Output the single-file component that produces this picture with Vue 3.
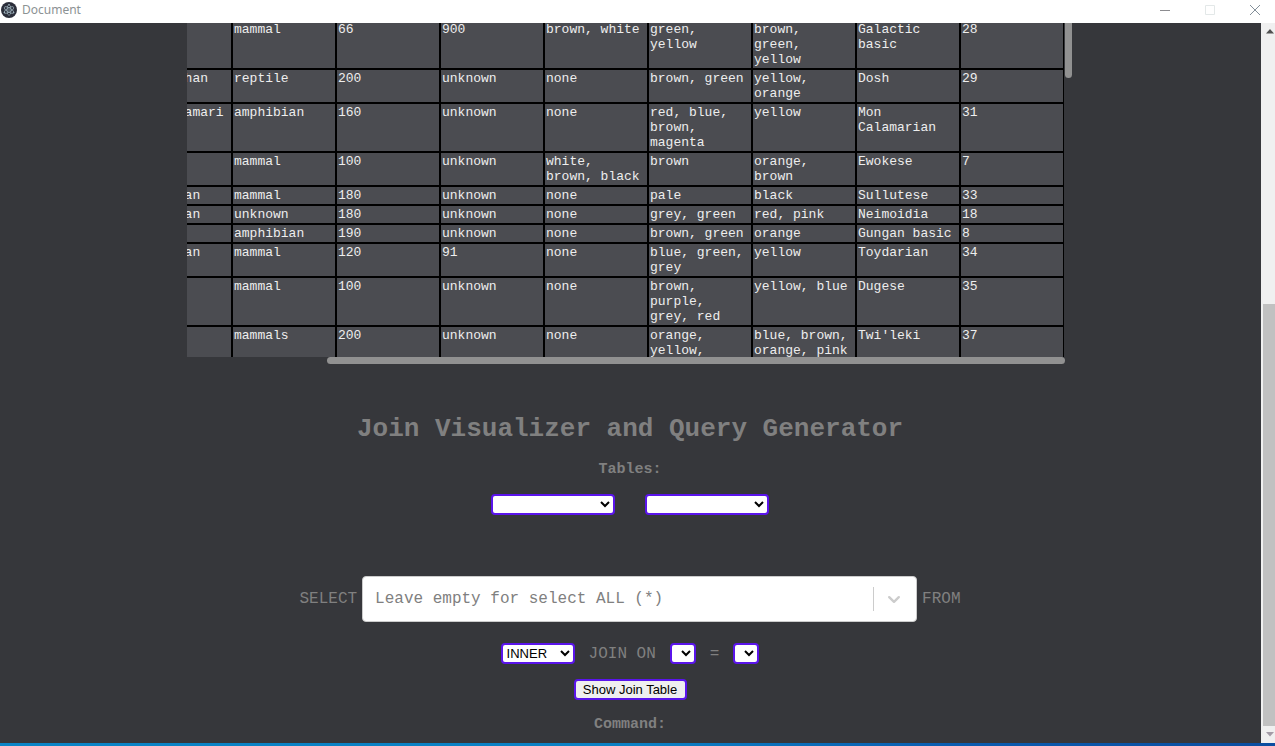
<script setup>
import { ref } from 'vue'

const rows = [
  ['', 'mammal', '66', '900', 'brown, white', 'green, yellow', 'brown, green, yellow', 'Galactic basic', '28'],
  ['Trandoshan', 'reptile', '200', 'unknown', 'none', 'brown, green', 'yellow, orange', 'Dosh', '29'],
  ['Mon Calamari', 'amphibian', '160', 'unknown', 'none', 'red, blue, brown, magenta', 'yellow', 'Mon Calamarian', '31'],
  ['', 'mammal', '100', 'unknown', 'white, brown, black', 'brown', 'orange, brown', 'Ewokese', '7'],
  ['Sullustan', 'mammal', '180', 'unknown', 'none', 'pale', 'black', 'Sullutese', '33'],
  ['Neimodian', 'unknown', '180', 'unknown', 'none', 'grey, green', 'red, pink', 'Neimoidia', '18'],
  ['', 'amphibian', '190', 'unknown', 'none', 'brown, green', 'orange', 'Gungan basic', '8'],
  ['Toydarian', 'mammal', '120', '91', 'none', 'blue, green, grey', 'yellow', 'Toydarian', '34'],
  ['', 'mammal', '100', 'unknown', 'none', 'brown, purple, grey, red', 'yellow, blue', 'Dugese', '35'],
  ['', 'mammals', '200', 'unknown', 'none', 'orange, yellow,', 'blue, brown, orange, pink', "Twi'leki", '37'],
]
const fields = ref('')
const joinType = ref('INNER')
</script>

<template>
  <div class="window">
    <header class="titlebar">
      <svg class="logo" viewBox="0 0 16 16" aria-hidden="true">
        <circle cx="8" cy="8" r="8" fill="#2b2e3a" />
        <g fill="none" stroke="#9fb3bd" stroke-width="0.7">
          <ellipse cx="8" cy="8" rx="5.4" ry="2" transform="rotate(30 8 8)" />
          <ellipse cx="8" cy="8" rx="5.4" ry="2" transform="rotate(-30 8 8)" />
          <ellipse cx="8" cy="8" rx="5.4" ry="2" transform="rotate(90 8 8)" />
        </g>
        <g fill="#9fb3bd">
          <circle cx="8" cy="8" r="0.7" />
          <circle cx="3.4" cy="10.6" r="0.8" />
          <circle cx="12.6" cy="10.6" r="0.8" />
          <circle cx="8" cy="2.7" r="0.8" />
        </g>
      </svg>
      <span class="caption">Document</span>
      <div class="controls">
        <button type="button" aria-label="Minimize">
          <svg viewBox="0 0 12 12"><path d="M1 6.5h10" stroke="#8c8c90" /></svg>
        </button>
        <button type="button" aria-label="Maximize">
          <svg viewBox="0 0 12 12"><path d="M1.5 1.5h9v9h-9z" fill="none" stroke="#e3e8e8" /></svg>
        </button>
        <button type="button" aria-label="Close">
          <svg viewBox="0 0 12 12"><path d="M1 1l10 10M11 1L1 11" stroke="#84909a" /></svg>
        </button>
      </div>
    </header>

    <div class="body">
      <main class="page">
        <section class="viewer">
          <div class="clip">
            <table>
              <tbody>
                <tr v-for="(row, i) in rows" :key="i">
                  <td v-for="(cell, j) in row" :key="j">{{ cell }}</td>
                </tr>
              </tbody>
            </table>
          </div>
          <div class="vbar"><div class="vthumb"></div></div>
          <div class="hbar"><div class="hthumb"></div></div>
        </section>

        <section class="join">
          <h1>Join Visualizer and Query Generator</h1>
          <h2>Tables:</h2>
          <div class="tables">
            <select class="ctl wide" aria-label="First table"></select>
            <select class="ctl wide" aria-label="Second table"></select>
          </div>
          <div class="columns">
            <label for="fields">SELECT</label>
            <div class="combo">
              <input id="fields" v-model="fields" type="text" placeholder="Leave empty for select ALL (*)" />
              <span class="divider"></span>
              <svg class="chev" viewBox="0 0 20 20" aria-hidden="true">
                <path d="M5.2 8.2l4.8 4.6 4.8-4.6" fill="none" stroke="#cccccc" stroke-width="2.4" stroke-linecap="round" stroke-linejoin="round" />
              </svg>
            </div>
            <span>FROM</span>
          </div>
          <div class="on">
            <select v-model="joinType" class="ctl type" aria-label="Join type">
              <option>INNER</option>
            </select>
            <span>JOIN ON</span>
            <select class="ctl small" aria-label="Left column"></select>
            <span>=</span>
            <select class="ctl small" aria-label="Right column"></select>
          </div>
          <button type="button" class="ctl show">Show Join Table</button>
          <h2>Command:</h2>
        </section>
      </main>

      <div class="scrollbar" aria-hidden="true">
        <svg class="arrow" viewBox="0 0 8 5"><path d="M4 0L8 4.5H0z" fill="#505050" /></svg>
        <div class="thumb"></div>
        <svg class="arrow" viewBox="0 0 8 5"><path d="M4 4.5L8 0H0z" fill="#a39ba6" /></svg>
      </div>
    </div>
    <footer class="edge"></footer>
  </div>
</template>

<style>
body {
  margin: 0;
  background: #36373b;
}
</style>

<style scoped>
.window {
  height: 100vh;
  display: flex;
  flex-direction: column;
  overflow: hidden;
  color: #808080;
  font-family: "Liberation Mono", "Courier New", monospace;
}
.titlebar {
  height: 23px;
  flex: none;
  display: flex;
  align-items: flex-start;
  background: #fff;
}
.logo {
  width: 16px;
  height: 16px;
  margin: 2px 5px 0 1px;
}
.caption {
  color: #8c9294;
  font: 12px/20px "Noto Sans", "Open Sans", sans-serif;
}
.controls {
  margin-left: auto;
  display: flex;
}
.controls button {
  width: 45px;
  height: 20px;
  padding: 0;
  border: 0;
  background: none;
  display: flex;
  align-items: center;
  justify-content: center;
}
.controls button:last-child {
  margin-right: -2px;
}
.controls svg {
  width: 12px;
  height: 12px;
}
.body {
  flex: 1;
  min-height: 0;
  display: flex;
}
.page {
  flex: 1;
  min-width: 0;
  padding-right: 1px;
  overflow: hidden;
  background: #36373b;
}
.viewer {
  width: 886px;
  margin: 0 auto;
  display: grid;
  grid-template-columns: 1fr 8px;
  grid-template-rows: 334px 7px;
}
.clip {
  display: flex;
  justify-content: flex-end;
  overflow: hidden;
  margin-right: 1px;
}
table {
  flex: none;
  align-self: flex-start;
  width: 936px;
  margin-top: -3px;
  table-layout: fixed;
  border-spacing: 0;
}
td {
  padding: 1px;
  border: 1px solid #000;
  background: #4b4c51;
  color: #eeeeee;
  font-size: 13px;
  line-height: 15px;
  vertical-align: top;
}
.vthumb {
  width: 7px;
  height: 55px;
  background: #919191;
  border-radius: 0 0 4px 4px;
}
.hthumb {
  width: 84%;
  height: 7px;
  margin-left: auto;
  background: #919191;
  border-radius: 4px;
}
.join {
  display: flex;
  flex-direction: column;
  align-items: center;
}
h1 {
  margin: 49px 0 0;
  font-size: 26px;
  line-height: 32px;
}
h2 {
  margin: 16px 0 0;
  font-size: 15px;
  line-height: 18px;
}
.ctl {
  box-sizing: border-box;
  height: 21px;
  padding: 0;
  border: 2px solid #5a14eb;
  border-radius: 4px;
  background: #fff;
  color: #000;
  font: 13px "Liberation Sans", Arial, sans-serif;
}
.tables {
  display: flex;
  gap: 30px;
  margin-top: 15px;
}
.wide {
  width: 124px;
}
.columns,
.on {
  display: flex;
  align-items: center;
  font-size: 16px;
  line-height: 20px;
}
.columns {
  gap: 5px;
  margin-top: 61px;
}
.combo {
  box-sizing: border-box;
  width: 555px;
  height: 46px;
  display: flex;
  align-items: center;
  background: #fff;
  border: 1px solid #cccccc;
  border-radius: 4px;
}
.combo input {
  flex: 1;
  min-width: 0;
  padding: 0 12px;
  border: 0;
  outline: 0;
  background: none;
  font: inherit;
}
.combo input::placeholder {
  color: #808080;
  opacity: 1;
}
.divider {
  width: 1px;
  height: 24px;
  background: #cccccc;
}
.chev {
  width: 20px;
  height: 20px;
  margin: 0 12px 0 10px;
}
.on {
  gap: 14px;
  margin-top: 21px;
}
.type {
  width: 74px;
}
.small {
  width: 26px;
}
.show {
  margin-top: 15px;
  width: 113px;
  background: #efefef;
}
.show + h2 {
  margin-top: 16px;
}
.scrollbar {
  width: 14px;
  display: flex;
  flex-direction: column;
  align-items: center;
  background: #f0f0f0;
}
.arrow {
  flex: none;
  width: 8px;
  height: 5px;
  margin: 6px 0 6px 3px;
}
.thumb {
  width: 12px;
  height: 422px;
  margin-top: auto;
  align-self: flex-end;
  background: #c1c1c1;
}
.edge {
  flex: none;
  height: 3px;
  background: linear-gradient(90deg, #0a85c7 0%, #0a80c4 50%, #0a5cb0 75%, #0a4da0 100%);
}
</style>
